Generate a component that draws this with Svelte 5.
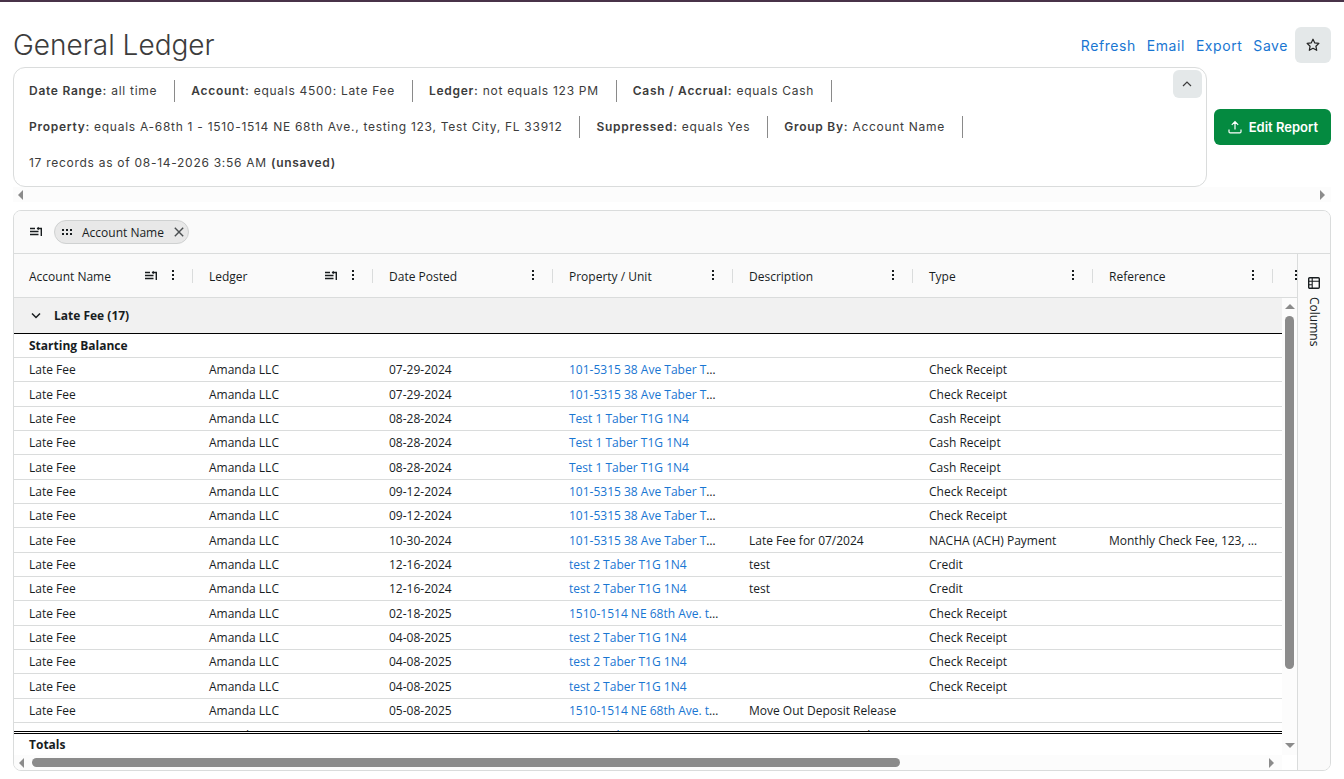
<!--
  General Ledger report: filter summary, actions and the grouped ledger grid.
-->

<script lang="ts">
  interface Filter {
    label: string;
    value: string;
  }

  interface Entry {
    date: string;
    property: string;
    description?: string;
    type?: string;
    reference?: string;
  }

  const actions = ['Refresh', 'Email', 'Export', 'Save'];

  const filters: Filter[] = [
    { label: 'Date Range', value: 'all time' },
    { label: 'Account', value: 'equals 4500: Late Fee' },
    { label: 'Ledger', value: 'not equals 123 PM' },
    { label: 'Cash / Accrual', value: 'equals Cash' },
    { label: 'Property', value: 'equals A-68th 1 - 1510-1514 NE 68th Ave., testing 123, Test City, FL 33912' },
    { label: 'Suppressed', value: 'equals Yes' },
    { label: 'Group By', value: 'Account Name' },
  ];

  const columns = [
    { name: 'Account Name', grouped: true },
    { name: 'Ledger', grouped: true },
    { name: 'Date Posted' },
    { name: 'Property / Unit' },
    { name: 'Description' },
    { name: 'Type' },
    { name: 'Reference' },
  ];

  const TABER_38 = '101-5315 38 Ave Taber T1G 1N4';
  const TEST_1 = 'Test 1 Taber T1G 1N4';
  const TEST_2 = 'test 2 Taber T1G 1N4';
  const NE_68TH = '1510-1514 NE 68th Ave. testing 123';

  const entries: Entry[] = [
    { date: '07-29-2024', property: TABER_38, type: 'Check Receipt' },
    { date: '07-29-2024', property: TABER_38, type: 'Check Receipt' },
    { date: '08-28-2024', property: TEST_1, type: 'Cash Receipt' },
    { date: '08-28-2024', property: TEST_1, type: 'Cash Receipt' },
    { date: '08-28-2024', property: TEST_1, type: 'Cash Receipt' },
    { date: '09-12-2024', property: TABER_38, type: 'Check Receipt' },
    { date: '09-12-2024', property: TABER_38, type: 'Check Receipt' },
    {
      date: '10-30-2024',
      property: TABER_38,
      description: 'Late Fee for 07/2024',
      type: 'NACHA (ACH) Payment',
      reference: 'Monthly Check Fee, 123, 456',
    },
    { date: '12-16-2024', property: TEST_2, description: 'test', type: 'Credit' },
    { date: '12-16-2024', property: TEST_2, description: 'test', type: 'Credit' },
    { date: '02-18-2025', property: NE_68TH, type: 'Check Receipt' },
    { date: '04-08-2025', property: TEST_2, type: 'Check Receipt' },
    { date: '04-08-2025', property: TEST_2, type: 'Check Receipt' },
    { date: '04-08-2025', property: TEST_2, type: 'Check Receipt' },
    { date: '05-08-2025', property: NE_68TH, description: 'Move Out Deposit Release' },
    { date: '05-08-2025', property: TEST_2, description: 'Move Out Deposit Release' },
  ];
</script>

{#snippet groupIcon()}
  <svg class="icon" viewBox="0 0 16 16" aria-hidden="true">
    <path d="M2 4.5h5M2 7.5h8.5M2 10.5h8.5" stroke="currentColor" stroke-width="1.3" fill="none" />
    <path d="M9 4.5h4.3V12" stroke="currentColor" stroke-width="1.4" fill="none" />
    <path d="M10.8 2.8v3.4L8.6 4.5z" fill="currentColor" />
  </svg>
{/snippet}

{#snippet menuIcon()}
  <svg class="icon" viewBox="0 0 16 16" aria-hidden="true">
    <path d="M7 2h2v2H7zM7 6h2v2H7zM7 10h2v2H7z" fill="currentColor" />
  </svg>
{/snippet}

<div class="page">
  <header class="title-bar">
    <h1>General Ledger</h1>
    <nav class="actions" aria-label="Report actions">
      {#each actions as action (action)}
        <a href="#{action.toLowerCase()}">{action}</a>
      {/each}
      <button class="star" type="button" aria-label="Add to favorites">
        <svg class="icon" viewBox="0 0 16 16" aria-hidden="true">
          <path
            d="M8 2.2l1.8 3.7 4.1.5-3 2.8.8 4.1L8 11.3l-3.7 2 .8-4.1-3-2.8 4.1-.5z"
            fill="none"
            stroke="currentColor"
            stroke-width="1.2"
            stroke-linejoin="round"
          />
        </svg>
      </button>
    </nav>
  </header>

  <section class="summary">
    <div class="filter-box">
      <ul class="filters">
        {#each filters as f (f.label)}
          <li><span class="filter"><b>{f.label}:</b> {f.value}</span></li>
        {/each}
        <li>17 records as of 08-14-2026 3:56 AM&nbsp;<b>(unsaved)</b></li>
      </ul>
      <button class="collapse" type="button" aria-label="Collapse filters">
        <svg class="icon" viewBox="0 0 16 16" aria-hidden="true">
          <path d="M4 10l4-4 4 4" fill="none" stroke="currentColor" stroke-width="1.2" />
        </svg>
      </button>
    </div>
    <button class="edit" type="button">
      <svg class="icon" viewBox="0 0 16 16" aria-hidden="true">
        <path
          d="M8 10.5V3M4.8 5.8L8 2.6l3.2 3.2M2 10.5v2.2c0 .7.5 1.2 1.2 1.2h9.6c.7 0 1.2-.5 1.2-1.2v-2.2"
          fill="none"
          stroke="currentColor"
          stroke-width="1.2"
        />
      </svg>
      Edit Report
    </button>
  </section>

  <div class="scroll-x" aria-hidden="true">
    <i class="arrow left"></i>
    <i class="arrow right"></i>
  </div>

  <section class="grid">
    <div class="group-bar">
      {@render groupIcon()}
      <span class="chip">
        <svg class="icon" viewBox="0 0 16 16" aria-hidden="true">
          <path
            d="M3 5h2v2H3zM7 5h2v2H7zM11 5h2v2h-2zM3 9h2v2H3zM7 9h2v2H7zM11 9h2v2h-2z"
            fill="currentColor"
          />
        </svg>
        Account Name
        <button type="button" aria-label="Remove Account Name grouping">
          <svg class="icon" viewBox="0 0 16 16" aria-hidden="true">
            <path d="M3.8 3.8l8.4 8.4M12.2 3.8l-8.4 8.4" stroke="currentColor" stroke-width="1.4" />
          </svg>
        </button>
      </span>
    </div>

    <div class="grid-main">
      <div class="sheet">
        <div class="viewport">
          <table>
            <colgroup>
              {#each columns as col (col.name)}
                <col class="col" />
              {/each}
              <col class="col-last" />
            </colgroup>
            <thead>
              <tr>
                {#each columns as col (col.name)}
                  <th scope="col">
                    <div class="head">
                      <span class="head-name">{col.name}</span>
                      {#if col.grouped}{@render groupIcon()}{/if}
                      {@render menuIcon()}
                    </div>
                  </th>
                {/each}
                <td><div class="head last">{@render menuIcon()}</div></td>
              </tr>
            </thead>
            <tbody>
              <tr class="group-row">
                <td colspan="8">
                  <div class="group-name">
                    <svg class="icon" viewBox="0 0 16 16" aria-hidden="true">
                      <path d="M4 5.5l4 4 4-4" fill="none" stroke="currentColor" stroke-width="1.5" />
                    </svg>
                    Late Fee (17)
                  </div>
                </td>
              </tr>
              <tr class="entry"><td class="strong" colspan="8">Starting Balance</td></tr>
              {#each entries as e, i (i)}
                <tr class="entry">
                  <td>Late Fee</td>
                  <td>Amanda LLC</td>
                  <td>{e.date}</td>
                  <td><a href="#property">{e.property}</a></td>
                  <td>{e.description ?? ''}</td>
                  <td>{e.type ?? ''}</td>
                  <td>{e.reference ?? ''}</td>
                  <td></td>
                </tr>
              {/each}
            </tbody>
          </table>
          <div class="scroll-y" aria-hidden="true">
            <i class="arrow up"></i>
            <div class="track-y"><i class="thumb-y"></i></div>
          </div>
        </div>
        <div class="totals">
          <span class="totals-name">Totals</span>
          <div class="scroll-end" aria-hidden="true"><i class="arrow down"></i></div>
        </div>
        <div class="scroll-x" aria-hidden="true">
          <i class="arrow left"></i>
          <div class="track-x"><i class="thumb-x"></i></div>
          <i class="arrow right"></i>
          <i class="corner"></i>
        </div>
      </div>

      <aside class="side">
        <button type="button">
          <svg class="icon" viewBox="0 0 16 16" aria-hidden="true">
            <rect x="2.7" y="2.7" width="10.6" height="10.6" rx="1" fill="none" stroke="currentColor" stroke-width="1.4" />
            <path d="M2.7 6.2h10.6M6.2 2.7v10.6M2.7 9.7h3.5" stroke="currentColor" stroke-width="1.1" />
          </svg>
          <span>Columns</span>
        </button>
      </aside>
    </div>
  </section>
</div>

<style>
  :global(body) {
    margin: 0;
    background: #fff;
  }
  .page {
    --line: #dadcdc;
    --panel: #fafafa;
    --link: #1976d2;
    --ink: #181d1f;
    --thumb: #8b8b8b;
    box-sizing: border-box;
    display: flex;
    flex-direction: column;
    height: 100vh;
    padding: 0 13px 8px;
    border-top: 2px solid #483248;
    font-family: Inter, sans-serif;
    font-size: 12px;
    color: #3c3c3c;
  }
  button {
    display: flex;
    align-items: center;
    justify-content: center;
    padding: 0;
    border: 0;
    background: none;
    font: inherit;
    color: inherit;
    cursor: pointer;
  }
  a {
    color: var(--link);
    text-decoration: none;
  }
  .icon {
    display: block;
    flex-shrink: 0;
    width: 16px;
    height: 16px;
  }

  .title-bar {
    display: flex;
    align-items: center;
    justify-content: space-between;
    padding: 25px 0 4px;
  }
  h1 {
    margin: 0;
    font-size: 28px;
    font-weight: 300;
    line-height: 36px;
  }
  .actions {
    display: flex;
    align-items: center;
    gap: 11px;
    font-size: 14px;
    letter-spacing: 0.04em;
  }
  .star {
    width: 36px;
    height: 36px;
    margin-left: -4px;
    border-radius: 6px;
    background: #e4e8e9;
    color: #222;
  }

  .summary {
    display: flex;
    align-items: center;
    gap: 7px;
  }
  .filter-box {
    display: flex;
    flex: 1;
    align-items: flex-start;
    padding: 2px 4px 2px 15px;
    border: 1px solid var(--line);
    border-radius: 12px;
  }
  .filters {
    display: flex;
    flex: 1;
    flex-wrap: wrap;
    margin: 0;
    padding: 3px 0;
    list-style: none;
    line-height: 22px;
    letter-spacing: 0.06em;
  }
  .filters li {
    padding: 7px 0;
  }
  .filter {
    display: block;
    margin-right: 16px;
    padding-right: 17px;
    border-right: 1px solid #8a8a8a;
  }
  b {
    font-weight: 600;
  }
  .collapse {
    width: 29px;
    height: 28px;
    border-radius: 6px;
    background: #e4e8e9;
  }
  .edit {
    gap: 6px;
    height: 36px;
    padding: 0 13px;
    border-radius: 6px;
    background: #048a40;
    color: #fff;
    font-size: 13px;
    font-weight: 600;
  }

  .scroll-x {
    display: flex;
    align-items: center;
    justify-content: space-between;
    height: 15px;
    padding: 0 6px 0 5px;
    background: #fcfcfc;
  }
  .arrow {
    width: 0;
    height: 0;
    border: 0 solid transparent;
  }
  .left {
    border-width: 5px 5px 5px 0;
    border-right-color: var(--thumb);
  }
  .right {
    border-width: 5px 0 5px 5px;
    border-left-color: var(--thumb);
  }
  .up {
    border-width: 0 5px 5px;
    border-bottom-color: var(--thumb);
  }
  .down {
    border-width: 5px 5px 0;
    border-top-color: var(--thumb);
  }

  .grid {
    display: flex;
    flex: 1;
    flex-direction: column;
    min-height: 0;
    margin-top: 8px;
    overflow: hidden;
    border: 1px solid var(--line);
    border-radius: 8px;
    font-family: 'Segoe UI', 'Open Sans', sans-serif;
    color: var(--ink);
  }
  .group-bar {
    display: flex;
    align-items: center;
    gap: 10px;
    height: 42px;
    padding: 0 14px;
    border-bottom: 1px solid var(--line);
    background: var(--panel);
  }
  .chip {
    display: flex;
    align-items: center;
    gap: 7px;
    box-sizing: border-box;
    height: 24px;
    padding: 0 1px 0 4px;
    border: 1px solid #cfd1d1;
    border-radius: 12px;
    background: #e8e8e8;
  }
  .chip button {
    color: #4a4e50;
  }
  .grid-main {
    display: flex;
    flex: 1;
    min-height: 0;
  }
  .sheet {
    display: flex;
    flex: 1;
    flex-direction: column;
    min-width: 0;
  }
  .viewport {
    position: relative;
    flex: 1;
    min-height: 0;
    overflow: hidden;
  }
  table {
    width: 1303px;
    border-collapse: separate;
    border-spacing: 0;
    table-layout: fixed;
  }
  .col {
    width: 180px;
  }
  .col-last {
    width: 43px;
  }
  th,
  td {
    box-sizing: border-box;
    padding: 0 15px;
    overflow: hidden;
    border-bottom: 1px solid var(--line);
    text-align: left;
    text-overflow: ellipsis;
    white-space: nowrap;
  }
  thead th,
  thead td {
    height: 44px;
    padding: 0;
    background: var(--panel);
    font-weight: 500;
  }
  .head {
    display: flex;
    align-items: center;
    gap: 6px;
    height: 14px;
    margin-right: 1px;
    padding: 0 11px 0 15px;
    border-right: 1px solid var(--line);
  }
  .head.last {
    justify-content: flex-end;
  }
  .head-name {
    flex: 1;
    padding-top: 2px;
  }
  .group-row td {
    height: 36px;
    border-bottom-color: #000;
    background: #f1f1f1;
  }
  .group-name {
    display: flex;
    align-items: center;
    gap: 10px;
    margin-left: -1px;
    font-weight: 700;
  }
  .entry td {
    height: 24px;
  }
  .entry:nth-child(3n + 1) td {
    height: 25px;
  }
  .entry:last-child td {
    height: 26px;
  }
  .strong {
    font-weight: 700;
  }
  /* overlays the right edge of the rows, below the header */
  .scroll-y {
    position: absolute;
    top: 44px;
    right: 0;
    bottom: 0;
    display: flex;
    flex-direction: column;
    align-items: center;
    gap: 7px;
    width: 15px;
    padding-top: 6px;
    box-sizing: border-box;
    background: #fcfcfc;
  }
  .track-y {
    flex: 1;
  }
  .thumb-y {
    display: block;
    width: 9px;
    height: 85%;
    border-radius: 5px;
    background: var(--thumb);
  }
  .totals {
    display: flex;
    height: 24px;
    line-height: 22px;
  }
  .totals-name {
    flex: 1;
    padding: 0 15px;
    border-top: 3px double #000;
    font-weight: 700;
  }
  .scroll-end {
    display: flex;
    align-items: flex-end;
    justify-content: center;
    box-sizing: border-box;
    width: 15px;
    padding-bottom: 7px;
    background: #fcfcfc;
  }
  .sheet .scroll-x {
    gap: 8px;
    padding-right: 0;
  }
  .track-x {
    flex: 1;
    margin-right: -2px;
  }
  .thumb-x {
    display: block;
    width: 70.5%;
    height: 9px;
    border-radius: 5px;
    background: var(--thumb);
  }
  .corner {
    align-self: stretch;
    width: 15px;
    background: #fff;
  }
  .side {
    width: 32px;
    border-left: 1px solid var(--line);
    background: var(--panel);
  }
  .side button {
    flex-direction: column;
    gap: 6px;
    width: 100%;
    padding: 21px 0;
  }
  .side span {
    writing-mode: vertical-rl;
  }
</style>
